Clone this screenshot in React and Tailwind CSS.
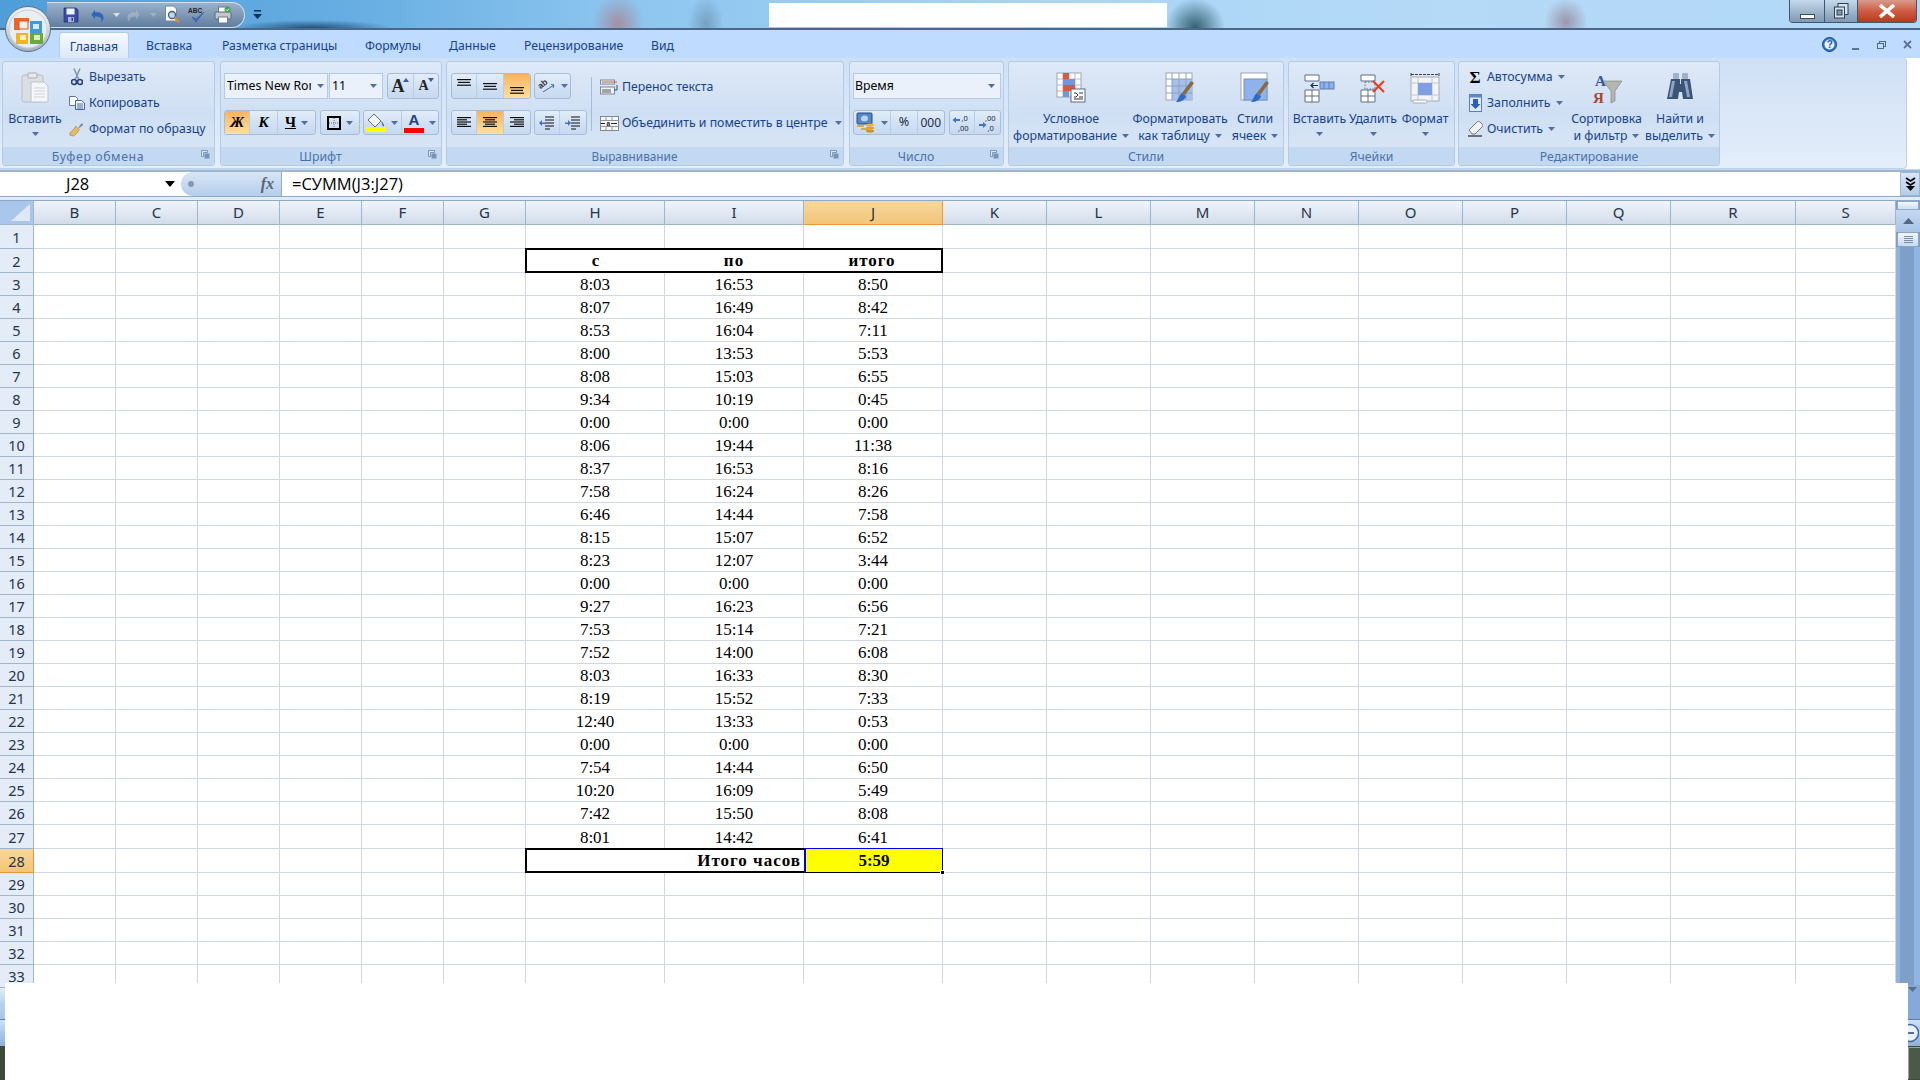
import React from "react";

const C = ({ c = "#4f6f9f", className = "" }) => (
  <svg width="7" height="4" viewBox="0 0 7 4" className={"inline-block shrink-0 " + className}><path d="M0 0h7L3.5 4z" fill={c} /></svg>
);

const OfficeLogo = () => (
  <svg width="46" height="46" viewBox="0 0 46 46">
    <defs>
      <radialGradient id="og" cx="50%" cy="30%" r="75%"><stop offset="0" stopColor="#ffffff" /><stop offset="0.6" stopColor="#dfe6ec" /><stop offset="1" stopColor="#8fa0ad" /></radialGradient>
    </defs>
    <circle cx="23" cy="23" r="22.5" fill="url(#og)" stroke="#5d7388" />
    <circle cx="23" cy="23" r="19" fill="#e9eef2" stroke="#c4ced6" />
    <path d="M9 12h15v5h-9v7H9z" fill="#e8672a" />
    <rect x="14" y="15" width="9" height="8" fill="#f5f0e8" stroke="#d8582a" />
    <path d="M25 15h12v12H25z" fill="#3f9bd8" />
    <rect x="28" y="18" width="6" height="5" fill="#d5ebf7" />
    <path d="M11 27h12v11H11z" fill="#f4b223" />
    <rect x="15" y="29" width="6" height="5" fill="#fbeec6" />
    <path d="M25 27h13v11H25z" fill="#6aa93a" />
    <rect x="29" y="29" width="6" height="5" fill="#d9edc6" />
  </svg>
);

const Save = () => (
  <svg width="16" height="16" viewBox="0 0 16 16"><path d="M1 1h12l2 2v12H1z" fill="#3a4ca5" stroke="#1f2a6b" strokeWidth=".7" /><rect x="3.5" y="1.5" width="8" height="6" fill="#f1f3fa" /><rect x="5" y="10" width="6" height="5" fill="#a9b4de" /><rect x="8.5" y="10.8" width="1.5" height="3" fill="#2c397f" /></svg>
);
const Undo = ({ c = "#2f66b8", className = "" }) => (
  <svg width="15" height="15" viewBox="0 0 15 15" className={className}><path d="M1.5 6.5 5 1.500v3c4-1 8.500 1 8.500 5 0 2-1 3.500-2.500 4.500 1-2 .8-6-6-5.500v3z" fill={c} /></svg>
);
const Preview = () => (
  <svg width="17" height="20" viewBox="0 0 17 20"><path d="M1.500 1h8l3 3v12h-11z" fill="#fbfbf6" stroke="#76879a" /><circle cx="8" cy="10" r="3.500" fill="#bcd8ee" stroke="#3f5f7f" strokeWidth="1.300" /><path d="m10.500 12.500 4.500 5" stroke="#e08a2a" strokeWidth="2.200" /></svg>
);
const Abc = () => (
  <svg width="18" height="19" viewBox="0 0 18 19" className="overflow-visible"><text x="0" y="6.500" fontSize="6.500" fontWeight="700" fontFamily="Liberation Sans" fill="#222">ABC</text><path d="m4 11 4 5 8-10-8 7z" fill="#3d6fd0" stroke="#24479a" strokeWidth=".5" /></svg>
);
const Printer = () => (
  <svg width="18" height="18" viewBox="0 0 18 18"><rect x="4.500" y="1" width="9" height="6" fill="#fff" stroke="#6d7a88" /><rect x="1" y="6" width="16" height="7" rx="1" fill="#c3c8cf" stroke="#5d6976" /><rect x="4.500" y="11" width="9" height="6" fill="#fff" stroke="#6d7a88" /><circle cx="13.500" cy="3.500" r="3" fill="#3aa655" /><path d="m12 3.500 1.200 1.200 1.800-2" stroke="#fff" fill="none" /></svg>
);
const Qat = () => (
  <svg width="9" height="11" viewBox="0 0 9 11"><rect x="1" y="1" width="7" height="1.600" fill="#10305f" /><path d="M0 5h9L4.500 10z" fill="#10305f" /></svg>
);
const Scissors = () => (
  <svg width="12" height="18" viewBox="0 0 12 18"><path d="M3 0.500 7.500 11M9 0.500 4.500 11" stroke="#8493a8" strokeWidth="1.500" /><circle cx="3" cy="14" r="2.500" fill="none" stroke="#253f80" strokeWidth="1.700" /><circle cx="9" cy="14" r="2.500" fill="none" stroke="#253f80" strokeWidth="1.700" /></svg>
);
const Copy = () => (
  <svg width="16" height="14" viewBox="0 0 16 14"><path d="M.500.500h6l2 2v7h-8z" fill="#fff" stroke="#5a79a8" /><path d="M6.500 4.500h6l3 2.500v6.500h-9z" fill="#f5f8fd" stroke="#3e66a8" /><path d="M8 8h6M8 10h6M8 12h6" stroke="#3e66a8" /></svg>
);
const Painter = () => (
  <svg width="17" height="15" viewBox="0 0 17 15"><path d="m10 5 3-3.500c1-1 2.500.5 1.500 1.500L11 6z" fill="#7d8794" /><path d="M1 11C3 9 5 8 7 4l4 3.500c-2 4-5 6-6.500 7-1 0-1.500-1-1.500-1-1 .5-2 .5-2 0z" fill="#e9bb63" stroke="#97753a" strokeWidth=".6" /></svg>
);
const Clip = () => (
  <svg width="28" height="31" viewBox="0 0 28 31"><rect x="1" y="3" width="21" height="27" rx="2" fill="#dbdee3" stroke="#b7bdc6" /><rect x="7" y="1" width="9" height="5" rx="1" fill="#e8e9ec" stroke="#a9aeb7" /><path d="M10 10h13l4 4v16H10z" fill="#f4f6f9" stroke="#bec4cc" /><path d="M13 16h11M13 19h11M13 22h11M13 25h11" stroke="#cfd3d9" /></svg>
);
const Launcher = () => (
  <svg width="9" height="9" viewBox="0 0 9 9"><path d="M.5.500h6v2h-4v4h-2z" fill="#dce7f5" stroke="#7f97b7" /><rect x="3.500" y="3.500" width="5" height="5" fill="#7893b6" /></svg>
);
const Lines = ({ a = "left", w = "#111" }) => {
  const sets = { left: [[0, 14], [0, 10], [0, 14], [0, 10], [0, 14]], center: [[0, 14], [2, 10], [0, 14], [2, 10], [0, 14]], right: [[0, 14], [4, 10], [0, 14], [4, 10], [0, 14]] };
  return (
    <svg width="14" height="11" viewBox="0 0 14 11">{sets[a].map((s, i) => <rect key={i} x={s[0]} y={i * 2.2} width={s[1]} height="1.200" fill={w} />)}</svg>
  );
};
const ThreeLines = () => (
  <svg width="14" height="7" viewBox="0 0 14 7"><rect width="14" height="1.200" fill="#111" /><rect x="1" y="2.800" width="12" height="1.200" fill="#111" /><rect y="5.600" width="14" height="1.200" fill="#111" /></svg>
);
const Orient = () => (
  <svg width="18" height="16" viewBox="0 0 18 16" className="overflow-visible"><text x="1" y="9" fontSize="8.500" fontWeight="700" fontFamily="Liberation Sans" fill="#333" transform="rotate(-40 5 8)">ab</text><path d="m5 14 11-7M13 6.500l3 .5-1 3" stroke="#4a6a9a" fill="none" /></svg>
);
const Indent = ({ r }) => (
  <svg width="16" height="14" viewBox="0 0 16 14"><path d="M6 1h9M6 4h9M6 7h9M6 10h9M6 13h5" stroke="#111" strokeWidth="1.200" /><path d={r ? "M0 6.500h3V4l3 3-3 3V8H0z" : "M6 6.500H3V4L0 7l3 3V8h3z"} fill="#3f74c5" /></svg>
);
const WrapIcon = () => (
  <svg width="19" height="17" viewBox="0 0 19 17"><rect x=".5" y="1" width="14" height="4" fill="#f2f3f5" stroke="#7e8896" /><rect x=".5" y="8" width="14" height="7" fill="#f2f3f5" stroke="#7e8896" /><path d="M2 3h15" stroke="#b8642e" /><path d="M2 11h9M2 13h9" stroke="#555" /><path d="M17 6v5h-3" stroke="#224e92" fill="none" /></svg>
);
const MergeIcon = () => (
  <svg width="19" height="15" viewBox="0 0 19 15"><rect x=".5" y=".5" width="18" height="14" fill="#f7f7f4" stroke="#7f8791" /><path d="M0 4.500h19M0 10.500h19M6 0v4M12 0v4M6 11v4M12 11v4" stroke="#8d96a1" /><text x="6.500" y="9.800" fontSize="6.500" fontWeight="700" fontFamily="Liberation Sans" fill="#222">a</text><path d="M1 7.500h4M11 7.500h6" stroke="#223" /></svg>
);
const Money = () => (
  <svg width="20" height="21" viewBox="0 0 20 21"><rect x="1" y="1" width="15" height="11" rx="1" fill="#5a86c8" stroke="#1f4b8c" /><ellipse cx="8.500" cy="6.500" rx="3.500" ry="3" fill="#b8d3f0" /><path d="M1 14h7M5 17h7" stroke="#d49a1d" strokeWidth="1.500" /><ellipse cx="14" cy="13" rx="4" ry="1.500" fill="#edb52f" /><ellipse cx="14" cy="16" rx="4" ry="1.500" fill="#e2a11f" /><ellipse cx="14" cy="19" rx="4" ry="1.500" fill="#d38f17" /></svg>
);
const Decimal = ({ more }) => (
  <svg width="20" height="20" viewBox="0 0 20 20">
    <text x={more ? "7" : "9.500"} y="8" fontSize="7.500" fontFamily="Noto Sans" fill="#1b2c46">{more ? ",00" : ",0"}</text>
    <text x={more ? "9.500" : "6"} y="17.500" fontSize="7.500" fontFamily="Noto Sans" fill="#1b2c46">{more ? ",0" : ",00"}</text>
    <path d={more ? "M1 11h4V9l3.500 3L5 15v-2H1z" : "M8 6H4V4L.5 7 4 10V8h4z"} fill="#3f74c5" />
  </svg>
);
const CondFmt = () => (
  <svg width="30" height="31" viewBox="0 0 30 31"><rect x="1" y="1" width="24" height="24" fill="#fff" stroke="#9ba5b2" /><path d="M7 1v24M13 1v24M19 1v24M1 7h24M1 13h24M1 19h24" stroke="#b5bcc6" /><rect x="7" y="1" width="6" height="6" fill="#e0563a" /><rect x="7" y="7" width="12" height="6" fill="#6f97dd" /><rect x="7" y="13" width="12" height="6" fill="#e0563a" /><rect x="7" y="19" width="6" height="6" fill="#6f97dd" /><rect x="15" y="17" width="14" height="13" fill="#fff" stroke="#5f6b7a" /><path d="M18 21h2l2 2-2 2h-2M23 21h4M23 25h4M18 27h9" stroke="#333" fill="none" /></svg>
);
const TableFmt = () => (
  <svg width="30" height="31" viewBox="0 0 30 31"><rect x="1" y="1" width="26" height="27" fill="#fff" stroke="#9ba5b2" /><rect x="7" y="7" width="20" height="21" fill="#a5c0ec" /><path d="M7 1v27M14 1v27M21 1v27M1 7h26M1 14h26M1 21h26" stroke="#8fa0b8" /><path d="M26 9 29 11 20 23l-3-2z" fill="#8a6b3f" /><path d="M17 21c-3 2-3 6-6 9 5 0 9-2 10-6z" fill="#2f6bc4" /></svg>
);
const CellFmt = () => (
  <svg width="30" height="31" viewBox="0 0 30 31"><rect x="1" y="1" width="26" height="27" fill="#fff" stroke="#9ba5b2" /><rect x="4" y="7" width="23" height="21" fill="#8fb1ec" stroke="#7892bf" /><path d="M26 9 29 11 20 23l-3-2z" fill="#8a6b3f" /><path d="M17 21c-3 2-3 6-6 9 5 0 9-2 10-6z" fill="#2f6bc4" /></svg>
);
const InsCell = () => (
  <svg width="31" height="31" viewBox="0 0 31 31"><path d="M1 3h14v6H1zM1 18h14v12H1zM8 18v12M1 24h14" fill="#fff" stroke="#5f6f86" /><rect x="16" y="10" width="14" height="7" fill="#8fb1ec" stroke="#5f7faf" /><path d="M20 10v7M25 10v7" stroke="#5f7faf" /><path d="M14 13.500H7M9.500 11 7 13.500 9.500 16" stroke="#1f2f4f" fill="none" strokeWidth="1.200" /></svg>
);
const DelCell = () => (
  <svg width="26" height="31" viewBox="0 0 26 31"><path d="M1 3h14v6H1zM1 18h14v12H1zM8 18v12M1 24h14" fill="#fff" stroke="#5f6f86" /><rect x="5" y="10" width="10" height="7" fill="none" stroke="#5f6f86" strokeDasharray="1.500 1.500" /><path d="m13 9 11 11M24 9 13 20" stroke="#ea3a1c" strokeWidth="2" /></svg>
);
const FmtCell = () => (
  <svg width="30" height="32" viewBox="0 0 30 32"><path d="M1 1v3M29 1v3M1 2.500h28" stroke="#39414c" strokeDasharray="3 1" /><rect x="1" y="5" width="28" height="24" fill="#f3f4f7" stroke="#a4abb6" /><path d="M8 5v24M22 5v24M1 11h28M1 23h28" stroke="#c1c6cf" /><rect x="8" y="11" width="14" height="12" fill="#7f9fe4" /><rect x="3" y="28" width="14" height="3" rx="1" fill="#fff" stroke="#a4abb6" /></svg>
);
const Sigma = () => <span className="font-['Liberation_Serif',serif] text-[17px] font-bold leading-none text-black">Σ</span>;
const Fill = () => (
  <svg width="13" height="18" viewBox="0 0 13 18"><rect x=".5" y=".5" width="12" height="17" fill="#dfe9f8" stroke="#5c7eb2" /><rect x=".5" y=".5" width="12" height="3" fill="#5f86c6" /><path d="M4 5h5v5h2.500l-5 5-5-5H4z" fill="#2a5fb8" /></svg>
);
const Eraser = () => (
  <svg width="15" height="16" viewBox="0 0 15 16"><path d="M1 9 9 1c1-1 2-1 3 0l2 2c1 1 1 2 0 3l-7 7H4z" fill="#f2f3f5" stroke="#6e7887" /><path d="M0 15h14" stroke="#000" /></svg>
);
const SortIcon = () => (
  <svg width="30" height="36" viewBox="0 0 30 36" className="overflow-visible"><text x="3" y="14" fontSize="15" fontWeight="700" fontFamily="Liberation Serif" fill="#2a5aa8">A</text><path d="M11 9h19l-7 10v10l-4 2V19z" fill="#b6b6b0" stroke="#7c7c78" strokeWidth=".6" /><text x="1" y="31" fontSize="15" fontWeight="700" fontFamily="Liberation Serif" fill="#a8452f">Я</text></svg>
);
const Binoculars = () => (
  <svg width="28" height="31" viewBox="0 0 28 31"><rect x="7" y="1" width="6" height="6" rx="1" fill="#9fb0c9" /><rect x="16" y="1" width="6" height="6" rx="1" fill="#9fb0c9" /><path d="M5 7h9v5h1V7h9l3 20H17l-1-7h-3l-1 7H1z" fill="#3c5576" /><path d="M6 9h3L6 25H3z" fill="#8ea5c4" /><path d="M18 9h3l3 16h-3z" fill="#8ea5c4" /></svg>
);
const FontA = ({ big, up }) => (
  <span className="relative flex items-center justify-center font-['Liberation_Serif',serif] font-bold text-[#222]">
    <span className={big ? "text-[18px] leading-none" : "text-[14px] leading-none"}>A</span>
    <svg width="6" height="4" viewBox="0 0 6 4" className="mb-3 -ml-px"><path d={up ? "M0 4h6L3 0z" : "M0 0h6L3 4z"} fill="#3b5c96" /></svg>
  </span>
);
const Borders = () => (
  <svg width="14" height="14" viewBox="0 0 14 14"><rect x="1" y="1" width="12" height="12" fill="none" stroke="#000" strokeWidth="2" /><path d="M7 2v10M2 7h10" stroke="#777" strokeDasharray="1 1" /></svg>
);
const Bucket = () => (
  <svg width="20" height="19" viewBox="0 0 20 19"><path d="m8 1 7 7-6 6-7-7z" fill="#f4f6f8" stroke="#5e6b7a" /><path d="M15 8c2 2 3 3 3 4.500 0 1-1 1.500-1.500 0z" fill="#2f73c9" /><rect y="14" width="20" height="5" fill="#ffff00" /></svg>
);
const LetterA = () => (
  <span className="flex flex-col items-center"><span className="font-['Liberation_Sans',sans-serif] text-[15px] font-bold leading-[14px] text-[#23407f]">A</span><span className="mt-[1px] block h-[5px] w-[20px] bg-[#ff0000]" /></span>
);

const Group = ({ className, label, launcher, labelClass = "", children }) => (
  <div className={"flex h-[105px] flex-col overflow-hidden rounded-[3px] border border-[#b4cbe6] bg-linear-to-b from-[#dee9f8] via-[#cfdff3] to-[#dbe8f8] " + className}>
    <div className="flex h-[85px] shrink-0">{children}</div>
    <div className={"relative flex flex-1 items-center justify-center bg-[#c3d9f1] pt-[2px] text-[12.3px] leading-none text-[#4b70a8] " + (launcher ? "pr-[21px]" : "")}>
      <span className={labelClass}>{label}</span>
      {launcher && <span className="absolute right-[4px] top-[3px] flex"><Launcher /></span>}
    </div>
  </div>
);
const Bar = ({ className = "", children }) => (
  <div className={"flex overflow-hidden rounded-[3px] border border-[#a6bdd9] bg-linear-to-b from-[#e3edf9] via-[#d2e1f4] to-[#c7d9f0] " + className}>{children}</div>
);
const Seg = ({ className = "", on, children, last }) => (
  <div className={"flex items-center justify-center gap-[5px] " + (last ? "" : "border-r border-[#b9cde5] ") + (on ? "bg-linear-to-b from-[#f8b25e] to-[#fde19c] " : "") + className}>{children}</div>
);
const Big = ({ className, icon, lines, arrowOwn, inline }) => (
  <div className={"flex shrink-0 flex-col items-center text-[12.3px] leading-[17px] text-[#15428b] " + className}>
    <div className="flex h-[48px] items-start justify-center pt-[10px]">{icon}</div>
    {lines.map((l, i) => (
      <div key={i} className="flex items-center justify-center gap-[5px] whitespace-nowrap">{l}{inline && i === lines.length - 1 && <C />}</div>
    ))}
    {arrowOwn && <div className="flex h-[14px] items-center"><C /></div>}
  </div>
);
const Small = ({ icon, text, arrow }) => (
  <div className="flex h-[26px] items-center whitespace-nowrap text-[12.3px] text-[#15428b]">
    <span className="flex w-[16px] shrink-0 items-center justify-center">{icon}</span>
    <span className="ml-[4px]">{text}</span>
    {arrow && <C className="ml-[5px]" />}
  </div>
);

const Tab = ({ className, children }) => <div className={"flex h-full items-center whitespace-nowrap pt-[5px] text-[12.2px] text-[#15428b] " + className}>{children}</div>;

const data = [
  ["8:03", "16:53", "8:50"], ["8:07", "16:49", "8:42"], ["8:53", "16:04", "7:11"], ["8:00", "13:53", "5:53"],
  ["8:08", "15:03", "6:55"], ["9:34", "10:19", "0:45"], ["0:00", "0:00", "0:00"], ["8:06", "19:44", "11:38"],
  ["8:37", "16:53", "8:16"], ["7:58", "16:24", "8:26"], ["6:46", "14:44", "7:58"], ["8:15", "15:07", "6:52"],
  ["8:23", "12:07", "3:44"], ["0:00", "0:00", "0:00"], ["9:27", "16:23", "6:56"], ["7:53", "15:14", "7:21"],
  ["7:52", "14:00", "6:08"], ["8:03", "16:33", "8:30"], ["8:19", "15:52", "7:33"], ["12:40", "13:33", "0:53"],
  ["0:00", "0:00", "0:00"], ["7:54", "14:44", "6:50"], ["10:20", "16:09", "5:49"], ["7:42", "15:50", "8:08"],
  ["8:01", "14:42", "6:41"],
];
const letters = ["B", "C", "D", "E", "F", "G", "H", "I", "J", "K", "L", "M", "N", "O", "P", "Q", "R", "S"];

const cellBase = "flex items-center justify-center border-r border-b border-[#d0d7e5] pt-[1px] font-['Liberation_Serif',serif] text-[17px] text-black leading-none";

const Cell = ({ r, col }) => {
  if (r === 2 && col >= 6 && col <= 8) {
    const t = ["с", "по", "итого"][col - 6];
    const b = col === 6 ? "border-l-2 " : "";
    const e = col === 8 ? "border-r-2 border-r-black " : "border-r-0 ";
    return <div className={"-mt-[1px] -ml-[1px] flex items-center justify-center border-y-2 border-black font-['Liberation_Serif',serif] text-[17px] font-bold leading-none tracking-[1px] text-black " + b + e}>{t}</div>;
  }
  if (r === 28 && col === 6) return <div className="-mt-[1px] -ml-[1px] border-y-2 border-l-2 border-black" />;
  if (r === 28 && col === 7) return <div className="-mt-[1px] flex items-center justify-end border-y-2 border-black pr-[3px] font-['Liberation_Serif',serif] text-[17px] font-bold leading-none tracking-[1px] text-black">Итого часов</div>;
  if (r === 28 && col === 8) {
    return (
      <div className="relative -mt-[1px] flex items-center justify-center border-t border-b border-l-2 border-r border-t-[#0000e0] border-l-[#0000e0] border-b-black border-r-black bg-[#ffff00] font-['Liberation_Serif',serif] text-[17px] font-bold leading-none text-black">
        5:59
        <span className="absolute -bottom-[3px] -right-[3px] h-[5px] w-[5px] border border-white bg-black" />
      </div>
    );
  }
  if (r >= 3 && r <= 27 && col >= 6 && col <= 8) return <div className={cellBase}>{data[r - 3][col - 6]}</div>;
  return <div className={cellBase} />;
};

export default function App() {
  const rows = Array.from({ length: 33 }, (_, i) => i + 1);
  return (
    <div className="relative flex h-[1080px] w-[1920px] flex-col overflow-hidden bg-white font-['Noto_Sans',sans-serif]">
      {/* title bar */}
      <div className="relative flex h-[30px] shrink-0 border-b-2 border-[#4a6787] bg-[radial-gradient(ellipse_26px_30px_at_618px_24px,rgba(176,115,122,0.65)_0%,transparent_100%),radial-gradient(ellipse_18px_28px_at_706px_24px,rgba(95,127,154,0.55)_0%,transparent_100%),radial-gradient(ellipse_30px_30px_at_1195px_28px,rgba(36,82,96,0.9)_0%,transparent_100%),radial-gradient(ellipse_22px_24px_at_1566px_22px,rgba(138,106,122,0.6)_0%,transparent_100%),radial-gradient(ellipse_80px_8px_at_312px_28px,#20507a_0%,transparent_100%),linear-gradient(90deg,#4f9ed9_0%,#66ade2_18%,#8cc5ef_32%,#a8d4f5_55%,#b5daf8_75%,#b2d8f8_100%)]">
        <div className="ml-[47px] mt-[2px] flex h-[26px] w-[198px] items-center rounded-r-full border border-l-0 border-[#d5dfe9] bg-linear-to-b from-[#9db0c6] via-[#7f98b5] to-[#5f7e9f] pl-[16px]">
          <span className="flex w-[27px]"><Save /></span>
          <span className="flex w-[23px]"><Undo /></span>
          <C c="#d5e0ef" />
          <span className="ml-[6px] flex w-[24px] opacity-45"><Undo c="#c3cbd4" className="-scale-x-100" /></span>
          <C c="#9fb0c5" />
          <span className="ml-[7px] flex w-[24px]"><Preview /></span>
          <span className="flex w-[26px]"><Abc /></span>
          <span className="flex w-[22px]"><Printer /></span>
        </div>
        <span className="ml-[8px] mt-[9px] flex"><Qat /></span>
        <div className="ml-auto mr-[3px] flex h-[23px] w-[128px] overflow-hidden rounded-b-[4px] border border-t-0 border-[#46566a]">
          <div className="flex w-[35px] items-end justify-center border-r border-[#46566a] bg-linear-to-b from-[#c5d9ec] to-[#7e99b2] pb-[3px]"><span className="block h-[5px] w-[15px] border border-[#3d4d60] bg-white" /></div>
          <div className="flex w-[33px] items-center justify-center border-r border-[#46566a] bg-linear-to-b from-[#c5d9ec] to-[#7e99b2]">
            <svg width="15" height="16" viewBox="0 0 15 16"><rect x="4" y=".5" width="10" height="11" fill="#d7e3ef" stroke="#2f3e50" /><rect x=".5" y="4" width="10" height="11" fill="#d7e3ef" stroke="#2f3e50" /><rect x="3" y="7" width="5" height="5" fill="#7e99b2" stroke="#2f3e50" /></svg>
          </div>
          <div className="flex flex-1 items-center justify-center bg-linear-to-b from-[#d79a8c] via-[#cf5b42] to-[#b53a22]">
            <svg width="16" height="14" viewBox="0 0 16 14"><path d="m1 1 14 12M15 1 1 13" stroke="#fff" strokeWidth="3.500" /></svg>
          </div>
        </div>
        <div className="absolute left-[769px] top-[3px] h-[24px] w-[398px] bg-white" />
        <div className="absolute left-[5px] top-[6px] z-10"><OfficeLogo /></div>
      </div>

      {/* tabs */}
      <div className="flex h-[28px] shrink-0 items-end bg-[#bfdbff] pl-[59px]">
        <div className="flex h-[26px] w-[70px] items-center justify-center rounded-t-[3px] border border-b-0 border-[#b2cbe6] bg-linear-to-b from-[#f5f9ff] to-[#dce9f9] pt-[3px] text-[12.3px] text-[#15428b]">Главная</div>
        <Tab className="w-[93px] pl-[17px]">Вставка</Tab>
        <Tab className="w-[143px]">Разметка страницы</Tab>
        <Tab className="w-[84px]">Формулы</Tab>
        <Tab className="w-[75px]">Данные</Tab>
        <Tab className="w-[127px]">Рецензирование</Tab>
        <Tab className="w-[40px]">Вид</Tab>
        <div className="ml-auto flex h-full items-center pt-[1px]">
          <span className="flex w-[26px] justify-center">
            <svg width="15" height="15" viewBox="0 0 15 15"><circle cx="7.500" cy="7.500" r="7" fill="#2f73c9" stroke="#1b4a8a" /><circle cx="7.500" cy="7.500" r="5" fill="#e8f2fd" /><text x="4.800" y="11" fontSize="10" fontWeight="700" fontFamily="Liberation Sans" fill="#2457a8">?</text></svg>
          </span>
          <span className="flex w-[26px] justify-center pt-[8px]"><span className="block h-[2px] w-[7px] bg-[#5d7590]" /></span>
          <span className="flex w-[26px] justify-center">
            <svg width="9" height="8" viewBox="0 0 9 8"><rect x="2.500" y=".5" width="6" height="5" fill="none" stroke="#4f6a88" /><rect x=".5" y="2.500" width="6" height="5" fill="#bfdbff" stroke="#4f6a88" /></svg>
          </span>
          <span className="flex w-[26px] justify-center">
            <svg width="9" height="9" viewBox="0 0 9 9"><path d="m1 1 7 7M8 1 1 8" stroke="#5d7590" strokeWidth="1.800" /></svg>
          </span>
        </div>
      </div>

      {/* ribbon */}
      <div className="flex h-[111px] w-[1907px] shrink-0 rounded-br-[4px] rounded-tr-[3px] border-b border-r border-[#bcd2ea] bg-linear-to-b from-[#cfe0f5] to-[#e4eefb] pl-[2px] pt-[3px]">
        <Group className="w-[213px]" label="Буфер обмена" launcher labelClass="tracking-[0.6px]">
          <Big className="w-[64px]" icon={<Clip />} lines={["Вставить"]} arrowOwn />
          <div className="ml-[2px] flex flex-col pt-[2px]">
            <Small icon={<Scissors />} text="Вырезать" />
            <Small icon={<Copy />} text="Копировать" />
            <Small icon={<Painter />} text="Формат по образцу" />
          </div>
        </Group>
        <Group className="ml-[5px] w-[222px]" label="Шрифт" launcher>
          <div className="flex flex-col gap-[11px] pl-[3px] pt-[11px]">
            <div className="flex h-[26px]">
              <div className="flex w-[104px] items-center justify-between border border-[#b4cbe6] bg-[#eaf1fb] pl-[2px] pr-[3px] text-[12.3px] text-black">
                <span className="w-[84px] overflow-hidden whitespace-nowrap">Times New Roman</span><C />
              </div>
              <div className="ml-[1px] flex w-[54px] items-center justify-between border border-[#b4cbe6] bg-[#eaf1fb] pl-[2px] pr-[5px] text-[12.3px] text-black">11<C /></div>
              <Bar className="ml-[4px] w-[52px]">
                <Seg className="w-[27px]"><FontA big up /></Seg>
                <Seg className="w-[25px]" last><FontA /></Seg>
              </Bar>
            </div>
            <div className="flex h-[25px]">
              <Bar className="w-[92px]">
                <Seg className="w-[26px] font-['Liberation_Serif',serif] text-[15px] font-bold italic text-black" on>Ж</Seg>
                <Seg className="w-[28px] font-['Liberation_Serif',serif] text-[15px] font-bold italic text-black">К</Seg>
                <Seg className="w-[38px] font-['Liberation_Serif',serif] text-[15px] font-bold text-black" last><span className="underline">Ч</span><C /></Seg>
              </Bar>
              <Bar className="ml-[4px] w-[40px]"><Seg className="w-full" last><Borders /><C /></Seg></Bar>
              <Bar className="ml-[3px] w-[76px]">
                <Seg className="w-[39px]"><Bucket /><C /></Seg>
                <Seg className="w-[37px]" last><LetterA /><C /></Seg>
              </Bar>
            </div>
          </div>
        </Group>
        <Group className="ml-[4px] w-[398px]" label="Выравнивание" launcher labelClass="text-[11.8px]">
          <div className="flex flex-col gap-[11px] pl-[4px] pt-[11px]">
            <div className="flex h-[26px]">
              <Bar className="w-[80px]">
                <Seg className="w-[26px] items-start pt-[5px]"><ThreeLines /></Seg>
                <Seg className="w-[27px]"><ThreeLines /></Seg>
                <Seg className="w-[27px] items-end pb-[4px]" on last><ThreeLines /></Seg>
              </Bar>
              <Bar className="ml-[3px] w-[37px]"><Seg className="w-full" last><Orient /><C /></Seg></Bar>
            </div>
            <div className="flex h-[25px]">
              <Bar className="w-[80px]">
                <Seg className="w-[26px]"><Lines a="left" /></Seg>
                <Seg className="w-[27px]" on><Lines a="center" /></Seg>
                <Seg className="w-[27px]" last><Lines a="right" /></Seg>
              </Bar>
              <Bar className="ml-[3px] w-[53px]">
                <Seg className="w-[26px]"><Indent /></Seg>
                <Seg className="w-[27px]" last><Indent r /></Seg>
              </Bar>
            </div>
          </div>
          <div className="ml-[4px] mt-[15px] h-[54px] w-px bg-[#a6bdd8]" />
          <div className="ml-[8px] flex flex-col gap-[10px] pt-[12px] text-[12.3px] text-[#15428b]">
            <div className="flex h-[26px] items-center gap-[3px]"><WrapIcon /><span>Перенос текста</span></div>
            <div className="flex h-[26px] items-center gap-[3px] whitespace-nowrap"><MergeIcon /><span>Объединить и поместить в центре</span><C className="ml-[4px]" /></div>
          </div>
        </Group>
        <Group className="ml-[5px] w-[155px]" label="Число" launcher>
          <div className="flex flex-col gap-[11px] pl-[3px] pt-[11px]">
            <div className="flex h-[26px] w-[148px] items-center justify-between border border-[#b4cbe6] bg-[#eaf1fb] pl-[1px] pr-[5px] text-[12.3px] text-black">Время<C /></div>
            <div className="flex h-[25px]">
              <Bar className="w-[92px]">
                <Seg className="w-[38px]"><Money /><C /></Seg>
                <Seg className="w-[27px] text-[12.5px] text-[#1d2f4a]">%</Seg>
                <Seg className="w-[27px] text-[12px] text-[#1d2f4a]" last>000</Seg>
              </Bar>
              <Bar className="ml-[4px] w-[52px]">
                <Seg className="w-[26px]"><Decimal more={false} /></Seg>
                <Seg className="w-[26px]" last><Decimal more /></Seg>
              </Bar>
            </div>
          </div>
        </Group>
        <Group className="ml-[4px] w-[276px]" label="Стили">
          <div className="flex pl-[3px]">
            <Big className="w-[118px]" icon={<CondFmt />} lines={["Условное", "форматирование"]} inline />
            <Big className="w-[100px]" icon={<TableFmt />} lines={["Форматировать", "как таблицу"]} inline />
            <Big className="w-[50px]" icon={<CellFmt />} lines={["Стили", "ячеек"]} inline />
          </div>
        </Group>
        <Group className="ml-[4px] w-[167px]" label="Ячейки">
          <div className="flex pl-[3px]">
            <Big className="w-[55px]" icon={<InsCell />} lines={["Вставить"]} arrowOwn />
            <Big className="w-[52px]" icon={<DelCell />} lines={["Удалить"]} arrowOwn />
            <Big className="w-[52px]" icon={<FmtCell />} lines={["Формат"]} arrowOwn />
          </div>
        </Group>
        <Group className="ml-[3px] w-[262px]" label="Редактирование">
          <div className="flex w-[112px] flex-col pl-[8px] pt-[2px]">
            <Small icon={<Sigma />} text="Автосумма" arrow />
            <Small icon={<Fill />} text="Заполнить" arrow />
            <Small icon={<Eraser />} text="Очистить" arrow />
          </div>
          <Big className="w-[71px]" icon={<SortIcon />} lines={["Сортировка", "и фильтр"]} inline />
          <Big className="w-[76px]" icon={<Binoculars />} lines={["Найти и", "выделить"]} inline />
        </Group>
      </div>

      {/* formula bar */}
      <div className="h-[3px] shrink-0 border-t border-[#c6d8ee] bg-[#9cb5d3]" />
      <div className="flex h-[24px] shrink-0 items-center bg-white text-black">
        <div className="flex h-full w-[181px] shrink-0 items-center pl-[66px] font-['Open_Sans',sans-serif] text-[16.5px]">
          <span className="w-[36px]">J28</span>
          <svg width="10" height="6" viewBox="0 0 10 6" className="ml-[63px]"><path d="M0 0h10L5 6z" fill="#000" /></svg>
        </div>
        <div className="flex h-full w-[101px] shrink-0 items-center justify-between rounded-l-[14px] border-r border-[#8fa9c9] bg-linear-to-b from-[#d8e6f7] to-[#b5cdeb] pl-[7px] pr-[7px]">
          <span className="block h-[6px] w-[6px] rounded-full bg-[#8b97a8]" />
          <span className="font-['Liberation_Serif',serif] text-[16px] font-bold italic leading-none text-[#5a6573]">fx</span>
        </div>
        <div className="ml-[10px] font-['Open_Sans',sans-serif] text-[16.5px]">=СУММ(J3:J27)</div>
        <div className="ml-auto flex h-full w-[20px] items-center justify-center border border-[#9cb5d3] bg-linear-to-b from-[#d8e6f7] to-[#b5cdeb]">
          <svg width="11" height="14" viewBox="0 0 11 14"><path d="m1 1 4.500 3L10 1M1 5l4.500 3L10 5" fill="none" stroke="#000" strokeWidth="1.600" /><path d="M1 9h9l-4.500 5z" fill="#000" /></svg>
        </div>
      </div>
      <div className="h-[5px] shrink-0 border-y border-[#8fa9c9] bg-[#e3ebf6]" />

      {/* sheet */}
      <div className="flex min-h-0 flex-1">
        <div className="flex w-[1896px] shrink-0 flex-col">
          <div className="grid grid-cols-[34px_82px_82px_82px_82px_82px_82px_139px_139px_139px_104px_104px_104px_104px_104px_104px_104px_125px_100px] grid-rows-[24px_24px_24px_repeat(24,23px)_24px_24px_repeat(5,23px)]">
            <div className="flex items-end justify-end border-r border-b border-[#9eb6ce] bg-[#aac6ea] p-[3px]">
              <svg width="19" height="17" viewBox="0 0 19 17"><path d="M19 0v17H0z" fill="#dfe9f6" /></svg>
            </div>
            {letters.map((l) => (
              <div key={l} className={"flex items-center justify-center border-r border-b text-[15px] leading-none text-[#26344a] " + (l === "J" ? "border-[#f29536] bg-linear-to-b from-[#f8d79b] to-[#f2c477]" : "border-[#9eb6ce] bg-linear-to-b from-[#f0f5fb] to-[#d2dcea]")}>{l}</div>
            ))}
            {rows.map((r) => (
              <React.Fragment key={r}>
                <div className={"flex items-center justify-center border-r border-b pt-[1px] text-[14.5px] leading-none text-[#26344a] " + (r === 28 ? "border-[#f29536] bg-linear-to-b from-[#f8d79b] to-[#f2c477]" : "border-[#9eb6ce] bg-[#e4ecf7]")}>{r}</div>
                {letters.map((_, c) => <Cell key={c} r={r} col={c} />)}
              </React.Fragment>
            ))}
          </div>
          <div className="flex-1 bg-linear-to-b from-[#e4ecf7] via-[#b8d2f0] to-[#a9c7ec]" />
        </div>
        <div className="flex w-[24px] shrink-0 flex-col bg-[#7d9fc8]">
          <div className="mx-[1px] mt-0 h-[9px] border border-[#90a9c8] bg-linear-to-b from-[#f2f7fd] to-[#cfdff3]" />
          <div className="flex h-[22px] items-center justify-center bg-linear-to-b from-[#c6d9f1] to-[#a8c3e6]">
            <svg width="11" height="6" viewBox="0 0 11 6"><path d="M0 6h11L5.500 0z" fill="#4f6685" /></svg>
          </div>
          <div className="mx-[1px] flex h-[15px] items-center justify-center rounded-[2px] border border-[#8aa5c7] bg-linear-to-b from-[#f3f7fc] to-[#c8daf0]">
            <svg width="9" height="8" viewBox="0 0 9 8"><path d="M0 .5h9M0 2.500h9M0 4.500h9M0 6.500h9" stroke="#7a8ea8" /></svg>
          </div>
          <div className="flex-1 border-l-4 border-r-[6px] border-l-[#8fb3dc] border-r-[#8fb5e0]" />
          <div className="flex h-[34px] items-start justify-end bg-[#84a9da] pr-[3px] pt-[2px]">
            <svg width="9" height="5" viewBox="0 0 9 5"><path d="M0 0h9L4.500 5z" fill="#5c6f8a" /></svg>
          </div>
        </div>
      </div>

      {/* status bar */}
      <div className="flex h-[27px] shrink-0 items-center justify-end border-t border-[#5d7ea8] bg-linear-to-b from-[#cfe1f7] via-[#a9c7ec] to-[#8fb0dc] pr-[1px]">
        <svg width="18" height="20" viewBox="0 0 18 20"><circle cx="9" cy="10" r="8.500" fill="#e8f0fa" stroke="#3d6a9e" strokeWidth="1.500" /><rect x="5" y="9" width="8" height="2" fill="#54708f" /></svg>
      </div>
      {/* taskbar */}
      <div className="flex h-[34px] shrink-0 justify-end bg-[#3b4a3a]">
        <div className="mt-[1px] h-[32px] w-[12px] border-l border-t border-[#9aa59a] bg-[#4a5a48]" />
      </div>

      {/* covering sheet */}
      <div className="absolute left-[5px] top-[983px] h-[97px] w-[1903px] bg-white" />
    </div>
  );
}
